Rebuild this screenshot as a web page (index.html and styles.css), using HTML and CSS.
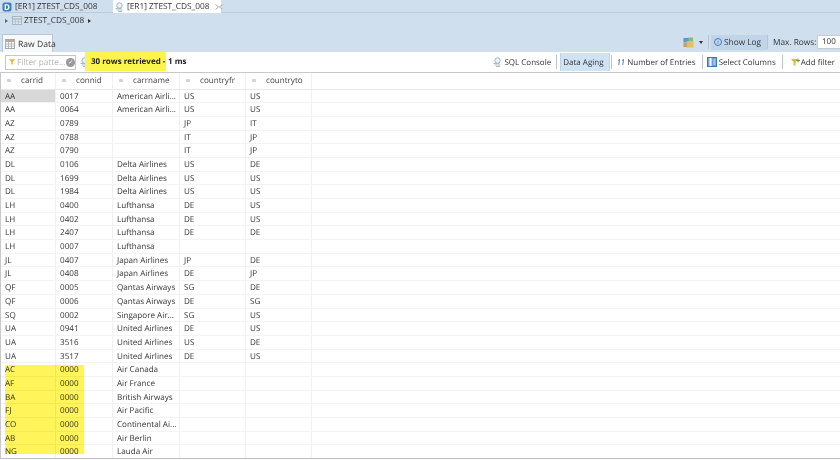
FILE: index.html
```html
<!DOCTYPE html>
<html lang="en">
<head>
<meta charset="utf-8">
<title>ZTEST_CDS_008</title>
<link rel="stylesheet" href="styles.css">
</head>
<body>
<div class="tabs">
  <div class="tab"><svg class="ico" viewBox="0 0 10 10"><rect x="0.5" y="0.5" width="9" height="9" rx="2" fill="#3f7fc0"/><text x="5" y="8" class="ico-letter">D</text></svg><span>[ER1] ZTEST_CDS_008</span></div>
  <div class="tab active"><svg class="ico" viewBox="0 0 10 10"><circle cx="5.5" cy="3.5" r="2.7" fill="#eef3f7" stroke="#9db3c6"/><path d="M1.5 6.5h6M2.5 8h6M4 9.5h4" stroke="#a9bccb" fill="none"/></svg><span>[ER1] ZTEST_CDS_008</span><svg class="close" viewBox="0 0 8 6"><path d="M0.5 0.5l3 2.5-3 2.5M7.5 0.5l-3 2.5 3 2.5" fill="none" stroke="#a8a8a8"/></svg></div>
</div>
<div class="head">
  <div class="crumb">
    <span class="tri"></span>
    <svg class="ico table-ico" viewBox="0 0 10 10"><rect x="0.5" y="0.5" width="9" height="8" fill="#dbe6f0" stroke="#9fb6cb"/><path d="M0.5 3h9" stroke="#d8a98c" stroke-width="1.4"/><path d="M3.5 3v5.5M6.5 3v5.5M0.5 5.7h9" stroke="#b4c4d3" fill="none"/></svg>
    <span>ZTEST_CDS_008</span>
    <span class="tri dark"></span>
  </div>
  <div class="head-bar">
    <div class="raw-tab"><svg class="ico" viewBox="0 0 10 10"><rect x="0.5" y="0.5" width="9" height="9" fill="#fff" stroke="#a3a9b0"/><path d="M0.5 2h9" stroke="#c2a893" stroke-width="2"/><path d="M0.5 5h9M0.5 7.2h9M3.5 3v6M6.5 3v6" stroke="#b3bcc6" fill="none"/></svg><span>Raw Data</span></div>
    <div class="head-tools">
      <svg class="ico tool-ico" viewBox="0 0 12 12"><rect x="0.5" y="1" width="6" height="5" fill="#5b97cf"/><rect x="6" y="0.5" width="5" height="4" fill="#8fb97a"/><rect x="4" y="4.5" width="7.5" height="7" fill="#e3bf6a"/><rect x="0.5" y="6.5" width="4" height="4.5" fill="#c9a35a"/></svg>
      <span class="caret"></span>
      <span class="sep"></span>
      <div class="log"><span class="info">i</span><span>Show Log</span></div>
      <span class="sep"></span>
      <span class="maxlabel">Max. Rows:</span>
      <div class="maxrows">100</div>
    </div>
  </div>
</div>
<div class="toolbar">
  <div class="filter">
    <svg class="ico" viewBox="0 0 10 10"><path d="M1 1.5h8L6 5v3.5L4 7.5V5z" fill="#eeb93c"/></svg>
    <span class="ph">Filter patte...</span>
    <span class="clear">&#10003;</span>
  </div>
  <svg class="ico status-ico" viewBox="0 0 10 10"><circle cx="5.5" cy="3.5" r="2.7" fill="#eef3f7" stroke="#9db3c6"/><path d="M1.5 6.5h6M2.5 8h6M4 9.5h4" stroke="#a9bccb" fill="none"/></svg>
  <div class="status"><span class="mark">30 rows retrieved -</span><span> 1 ms</span></div>
  <div class="actions">
    <div class="act sql"><svg class="ico" viewBox="0 0 10 10"><circle cx="5.5" cy="3.5" r="2.7" fill="#eef3f7" stroke="#9db3c6"/><path d="M1.5 6.5h6M2.5 8h6M4 9.5h4" stroke="#a9bccb" fill="none"/></svg><span>SQL Console</span></div>
    <span class="sep"></span>
    <div class="act on"><span>Data Aging</span></div>
    <span class="sep"></span>
    <div class="act num"><svg class="count" viewBox="0 0 8 8"><path d="M2.5 1.5L1 2.5M2.5 1.5L1.8 7M6.5 1.5L5 2.5M6.5 1.5L5.8 7" fill="none" stroke="#5d7fa8"/></svg><span>Number of Entries</span></div>
    <span class="sep"></span>
    <div class="act cols"><svg class="ico" viewBox="0 0 10 10"><rect x="0.5" y="0.5" width="9" height="9" fill="#6aa5d8" stroke="#3f78ad"/><path d="M3.5 1v8" stroke="#fff" stroke-width="2"/><path d="M6.5 3h2M6.5 5h2M6.5 7h2" stroke="#d5e6f5"/></svg><span>Select Columns</span></div>
    <span class="sep"></span>
    <div class="act add"><svg class="ico" viewBox="0 0 10 10"><path d="M1 2h7L5.5 5v4L3.5 8V5z" fill="#d9bb45"/><path d="M6 3.5h4M8 1.5v4" stroke="#6d9b4a"/></svg><span>Add filter</span></div>
  </div>
</div>
<div class="grid">
  <div class="row header"><div class="c"><i></i>carrid</div><div class="c"><i></i>connid</div><div class="c"><i></i>carrname</div><div class="c"><i></i>countryfr</div><div class="c"><i></i>countryto</div><div class="c"></div></div>
  <div class="row"><div class="c sel">AA</div><div class="c">0017</div><div class="c">American Airli...</div><div class="c">US</div><div class="c">US</div><div class="c"></div></div>
  <div class="row"><div class="c">AA</div><div class="c">0064</div><div class="c">American Airli...</div><div class="c">US</div><div class="c">US</div><div class="c"></div></div>
  <div class="row"><div class="c">AZ</div><div class="c">0789</div><div class="c"></div><div class="c">JP</div><div class="c">IT</div><div class="c"></div></div>
  <div class="row"><div class="c">AZ</div><div class="c">0788</div><div class="c"></div><div class="c">IT</div><div class="c">JP</div><div class="c"></div></div>
  <div class="row"><div class="c">AZ</div><div class="c">0790</div><div class="c"></div><div class="c">IT</div><div class="c">JP</div><div class="c"></div></div>
  <div class="row"><div class="c">DL</div><div class="c">0106</div><div class="c">Delta Airlines</div><div class="c">US</div><div class="c">DE</div><div class="c"></div></div>
  <div class="row"><div class="c">DL</div><div class="c">1699</div><div class="c">Delta Airlines</div><div class="c">US</div><div class="c">US</div><div class="c"></div></div>
  <div class="row"><div class="c">DL</div><div class="c">1984</div><div class="c">Delta Airlines</div><div class="c">US</div><div class="c">US</div><div class="c"></div></div>
  <div class="row"><div class="c">LH</div><div class="c">0400</div><div class="c">Lufthansa</div><div class="c">DE</div><div class="c">US</div><div class="c"></div></div>
  <div class="row"><div class="c">LH</div><div class="c">0402</div><div class="c">Lufthansa</div><div class="c">DE</div><div class="c">US</div><div class="c"></div></div>
  <div class="row"><div class="c">LH</div><div class="c">2407</div><div class="c">Lufthansa</div><div class="c">DE</div><div class="c">DE</div><div class="c"></div></div>
  <div class="row"><div class="c">LH</div><div class="c">0007</div><div class="c">Lufthansa</div><div class="c"></div><div class="c"></div><div class="c"></div></div>
  <div class="row"><div class="c">JL</div><div class="c">0407</div><div class="c">Japan Airlines</div><div class="c">JP</div><div class="c">DE</div><div class="c"></div></div>
  <div class="row"><div class="c">JL</div><div class="c">0408</div><div class="c">Japan Airlines</div><div class="c">DE</div><div class="c">JP</div><div class="c"></div></div>
  <div class="row"><div class="c">QF</div><div class="c">0005</div><div class="c">Qantas Airways</div><div class="c">SG</div><div class="c">DE</div><div class="c"></div></div>
  <div class="row"><div class="c">QF</div><div class="c">0006</div><div class="c">Qantas Airways</div><div class="c">DE</div><div class="c">SG</div><div class="c"></div></div>
  <div class="row"><div class="c">SQ</div><div class="c">0002</div><div class="c">Singapore Air...</div><div class="c">SG</div><div class="c">US</div><div class="c"></div></div>
  <div class="row"><div class="c">UA</div><div class="c">0941</div><div class="c">United Airlines</div><div class="c">DE</div><div class="c">US</div><div class="c"></div></div>
  <div class="row"><div class="c">UA</div><div class="c">3516</div><div class="c">United Airlines</div><div class="c">US</div><div class="c">DE</div><div class="c"></div></div>
  <div class="row"><div class="c">UA</div><div class="c">3517</div><div class="c">United Airlines</div><div class="c">DE</div><div class="c">US</div><div class="c"></div></div>
  <div class="row"><div class="c">AC</div><div class="c">0000</div><div class="c">Air Canada</div><div class="c"></div><div class="c"></div><div class="c"></div></div>
  <div class="row"><div class="c">AF</div><div class="c">0000</div><div class="c">Air France</div><div class="c"></div><div class="c"></div><div class="c"></div></div>
  <div class="row"><div class="c">BA</div><div class="c">0000</div><div class="c">British Airways</div><div class="c"></div><div class="c"></div><div class="c"></div></div>
  <div class="row"><div class="c">FJ</div><div class="c">0000</div><div class="c">Air Pacific</div><div class="c"></div><div class="c"></div><div class="c"></div></div>
  <div class="row"><div class="c">CO</div><div class="c">0000</div><div class="c">Continental Ai...</div><div class="c"></div><div class="c"></div><div class="c"></div></div>
  <div class="row"><div class="c">AB</div><div class="c">0000</div><div class="c">Air Berlin</div><div class="c"></div><div class="c"></div><div class="c"></div></div>
  <div class="row"><div class="c">NG</div><div class="c">0000</div><div class="c">Lauda Air</div><div class="c"></div><div class="c"></div><div class="c"></div></div>
</div>
<div class="highlight"></div>
</body>
</html>
```
FILE: styles.css
```css
* { box-sizing: border-box; }
html, body { margin: 0; height: 100%; }
body {
  position: relative;
  width: 840px;
  height: 460px;
  overflow: hidden;
  background: #fff;
  color: #333;
  font-family: "Open Sans", "Noto Sans", sans-serif;
  font-size: 8.3px;
  text-rendering: geometricPrecision;
  display: flex;
  flex-direction: column;
}
.ico { width: 10px; height: 10px; flex: none; }
.ico-letter { font-size: 8px; fill: #fff; text-anchor: middle; font-weight: 700; }

.tabs { height: 13px; display: flex; background: #d0dfee; border-bottom: 1px solid #bccbda; flex: none; white-space: nowrap; }
.tab { display: flex; align-items: center; gap: 3px; padding-left: 2px; width: 113px; height: 13px; }
.tab.active { background: #fff; width: 108px; padding-left: 1px; }
.close { width: 8px; height: 6px; margin-left: 3px; flex: none; }

.head { height: 39px; background: #d0dfee; display: flex; flex-direction: column; flex: none; padding-left: 2px; }
.crumb { height: 17px; display: flex; align-items: center; gap: 3px; padding: 0 0 2px 3px; flex: none; }
.tri { width: 0; height: 0; border-left: 3px solid #666; border-top: 2.5px solid transparent; border-bottom: 2.5px solid transparent; margin-right: 1px; }
.tri.dark { border-left-color: #333; margin-left: 1px; }
.table-ico { margin-right: -1px; }
.head-bar { flex: 1; display: flex; justify-content: space-between; align-items: flex-end; }
.raw-tab { width: 51px; height: 18px; background: #f7f8fa; border: 1px solid #b9c5d1; border-bottom: 0; display: flex; align-items: center; gap: 3px; padding-left: 2px; font-size: 8.6px; white-space: nowrap; }
.head-tools { display: flex; align-items: center; height: 18px; margin-bottom: 1px; white-space: nowrap; }
.tool-ico { width: 11px; height: 11px; margin-right: 4px; }
.caret { width: 0; height: 0; border-top: 3px solid #333; border-left: 2.5px solid transparent; border-right: 2.5px solid transparent; margin: 0 5px 0 1px; }
.sep { width: 1px; height: 14px; background: #b8c4cf; flex: none; }
.log { display: flex; align-items: center; gap: 2px; height: 15px; width: 56px; padding-left: 3px; background: #c0d4ea; margin-left: 2px; }
.info { width: 8px; height: 8px; border: 1px solid #4a7fb5; border-radius: 50%; color: #2f6aa8; font-size: 6px; line-height: 6px; text-align: center; flex: none; }
.maxlabel { margin: 0 2px 0 5px; width: 42px; }
.maxrows { width: 23px; height: 14px; background: #fff; border: 1px solid #c3ccd5; border-right: 0; padding-left: 4px; line-height: 12px; font-size: 8px; }

.toolbar { height: 21px; flex: none; display: flex; align-items: center; border-bottom: 1px solid #c9c9c9; padding-left: 5px; background: #fff; white-space: nowrap; font-size: 8px; }
.filter { width: 71px; height: 15px; border: 1px solid #c6c6c6; display: flex; align-items: center; padding-left: 2px; gap: 1px; flex: none; font-size: 8.3px; }
.filter .ico { width: 8px; height: 8px; }
.ph { color: #b5b5b5; flex: 1; }
.clear { width: 9px; height: 9px; border-radius: 50%; background: #9a9a9a; color: #fff; font-size: 6px; line-height: 9px; text-align: center; }
.status-ico { margin-left: 3px; }
.status { font-weight: 700; color: #222; align-self: stretch; display: flex; align-items: center; white-space: pre; margin-left: -4px; padding-bottom: 1px; }
.mark { background: #fff34d; height: 19px; width: 81px; display: flex; align-items: center; padding-left: 6px; }
.actions { margin-left: auto; display: flex; align-items: center; height: 100%; }
.act { display: flex; align-items: center; height: 100%; }
.act.sql { gap: 2px; padding-right: 5px; }
.act.on { background: #cfe3f5; border: 1px solid #bcd3e8; border-width: 0 1px; width: 50px; height: 18px; padding-left: 2px; margin: 0 1px 0 3px; }
.act.num { gap: 2px; padding: 0 6px 0 5px; }
.act.cols { gap: 2px; padding: 0 6px 0 4px; }
.act.add { gap: 1px; padding: 0 5px 0 7px; }
.count { width: 8px; height: 8px; flex: none; }

.grid { flex: none; height: 386px; overflow: hidden; border-left: 1px solid #c9c9c9; border-bottom: 1px solid #bdbdbd; font-size: 8.1px; }
.row { display: grid; grid-template-columns: 55px 57px 67px 66px 66px 1fr; height: 13.69px; border-bottom: 1px solid #f3f3f3; }
.row.header { height: 16.5px; border-bottom-color: #e8e8e8; }
.c { padding-left: 4px; border-right: 1px solid #f0f0f0; line-height: 13.5px; white-space: nowrap; overflow: hidden; }
.c:last-child { border-right: 0; }
.header .c { padding-left: 6px; line-height: 16px; color: #444; display: flex; align-items: center; gap: 10px; }
.header i { width: 4px; height: 3px; background: #cdd3d8; flex: none; border-radius: 1px; }
.sel { background: #d8d8d8; }

.highlight { position: absolute; left: 5px; top: 365px; width: 79px; height: 89px; background: #fff45a; mix-blend-mode: multiply; }
```
